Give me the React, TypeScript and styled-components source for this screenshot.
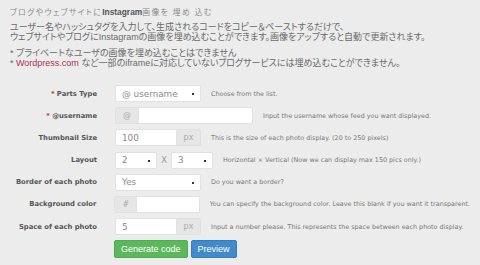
import * as React from 'react'
import styled, { createGlobalStyle } from 'styled-components'

const GlobalStyle = createGlobalStyle`
  html, body {
    margin: 0;
    padding: 0;
    background: #ececec;
  }
`

const Page = styled.div`
  width: 480px;
  height: 265px;
  padding: 7px 10px 0 10px;
  box-sizing: border-box;
  overflow: hidden;
  font-family: "Liberation Sans", "Noto Sans CJK JP", sans-serif;
  font-feature-settings: "palt";
`

const Lead = styled.p`
  margin: 0 0 4px;
  font-size: 7.8px;
  line-height: 10px;
  letter-spacing: 1.4px;
  color: #8a8a8a;

  b {
    color: #555;
    letter-spacing: 0;
    font-size: 8.4px;
  }
`

const Intro = styled.p`
  margin: 0 0 6px;
  font-size: 9px;
  line-height: 10px;
  color: #6a6a6a;
`

const Notes = styled.ul`
  list-style: none;
  margin: 0 0 17px;
  padding: 0;
  font-size: 9px;
  line-height: 10px;
  color: #6a6a6a;

  a {
    color: #b03050;
    text-decoration: none;
  }
`

const Form = styled.div`
  display: flex;
  flex-direction: column;
  gap: 5.2px;
  font-family: "DejaVu Sans", Verdana, sans-serif;
  font-feature-settings: normal;
`

const Row = styled.div`
  display: flex;
  align-items: center;
  height: 17px;
`

const Label = styled.div`
  width: 87px;
  margin-right: 18px;
  text-align: right;
  font-size: 6.8px;
  font-weight: bold;
  color: #555;
  white-space: nowrap;

  span {
    color: #c0392b;
  }
`

const Group = styled.div<{ $w: number }>`
  display: flex;
  width: ${p => p.$w}px;
  height: 17px;
`

const Select = styled.div<{ $w?: number }>`
  position: relative;
  display: flex;
  align-items: center;
  width: ${p => (p.$w ? `${p.$w}px` : '100%')};
  height: 17px;
  padding-left: 6px;
  box-sizing: border-box;
  background: #fff;
  border: 1px solid #e2e2e2;
  border-radius: 2px;
  font-size: 8.8px;
  color: #8a8a8a;

  &::after {
    content: '';
    position: absolute;
    right: 6px;
    top: 7px;
    width: 2px;
    height: 2px;
    background: #333;
  }
`

const Input = styled.div`
  flex: 1;
  display: flex;
  align-items: center;
  padding-left: 6px;
  box-sizing: border-box;
  background: #fff;
  border: 1px solid #e2e2e2;
  font-size: 8.8px;
  color: #8a8a8a;
  &:first-child {
    border-radius: 2px 0 0 2px;
  }
  &:last-child {
    border-radius: 0 2px 2px 0;
  }
`

const Addon = styled.div<{ $w: number }>`
  width: ${p => p.$w}px;
  display: flex;
  align-items: center;
  justify-content: center;
  box-sizing: border-box;
  background: #e6e6e6;
  border: 1px solid #e0e0e0;
  font-size: 8px;
  color: #aaa;
  &:first-child {
    border-radius: 2px 0 0 2px;
    border-right: none;
  }
  &:last-child {
    border-radius: 0 2px 2px 0;
    border-left: none;
  }
`

const Times = styled.span`
  width: 14px;
  text-align: center;
  font-size: 8.4px;
  color: #999;
`

const Help = styled.div`
  margin-left: 10px;
  font-size: 6.4px;
  color: #777;
  white-space: nowrap;
`

const Buttons = styled.div`
  display: flex;
  gap: 3px;
  padding-left: 104px;
`

const Button = styled.button<{ $tone: 'green' | 'blue' }>`
  height: 18px;
  padding: 0 6px;
  border-radius: 2px;
  border: 1px solid ${p => (p.$tone === 'green' ? '#4cae4c' : '#357ebd')};
  background: ${p => (p.$tone === 'green' ? '#5cb85c' : '#428bca')};
  color: #fff;
  font-family: "Liberation Sans", Arial, sans-serif;
  font-size: 9px;
  line-height: 16px;
  cursor: pointer;
`

export default function App() {
  return (
    <Page>
      <GlobalStyle />
      <Lead>
        ブログやウェブサイトに<b>Instagram</b>画像を 埋め 込む
      </Lead>
      <Intro>
        ユーザー名やハッシュタグを入力して、生成されるコードをコピー＆ペーストするだけで、
        <br />
        ウェブサイトやブログにInstagramの画像を埋め込むことができます。画像をアップすると自動で更新されます。
      </Intro>
      <Notes>
        <li>* プライベートなユーザの画像を埋め込むことはできません</li>
        <li>
          * <a href="#">Wordpress.com</a> など一部のiframeに対応していないブログサービスには埋め込むことができません。
        </li>
      </Notes>

      <Form>
        <Row>
          <Label><span>*</span> Parts Type</Label>
          <Select $w={86}>@ username</Select>
          <Help>Choose from the list.</Help>
        </Row>
        <Row>
          <Label><span>*</span> @username</Label>
          <Group $w={138}>
            <Addon $w={23}>@</Addon>
            <Input />
          </Group>
          <Help>Input the username whose feed you want displayed.</Help>
        </Row>
        <Row>
          <Label>Thumbnail Size</Label>
          <Group $w={86}>
            <Input>100</Input>
            <Addon $w={24}>px</Addon>
          </Group>
          <Help>This is the size of each photo display. (20 to 250 pixels)</Help>
        </Row>
        <Row>
          <Label>Layout</Label>
          <Select $w={42}>2</Select>
          <Times>X</Times>
          <Select $w={42}>3</Select>
          <Help>Horizontal × Vertical (Now we can display max 150 pics only.)</Help>
        </Row>
        <Row>
          <Label>Border of each photo</Label>
          <Select $w={86}>Yes</Select>
          <Help>Do you want a border?</Help>
        </Row>
        <Row>
          <Label>Background color</Label>
          <Group $w={86}>
            <Addon $w={22}>#</Addon>
            <Input />
          </Group>
          <Help>You can specify the background color. Leave this blank if you want it transparent.</Help>
        </Row>
        <Row>
          <Label>Space of each photo</Label>
          <Group $w={86}>
            <Input>5</Input>
            <Addon $w={24}>px</Addon>
          </Group>
          <Help>Input a number please. This represents the space between each photo display.</Help>
        </Row>
        <Buttons>
          <Button $tone="green">Generate code</Button>
          <Button $tone="blue">Preview</Button>
        </Buttons>
      </Form>
    </Page>
  )
}
